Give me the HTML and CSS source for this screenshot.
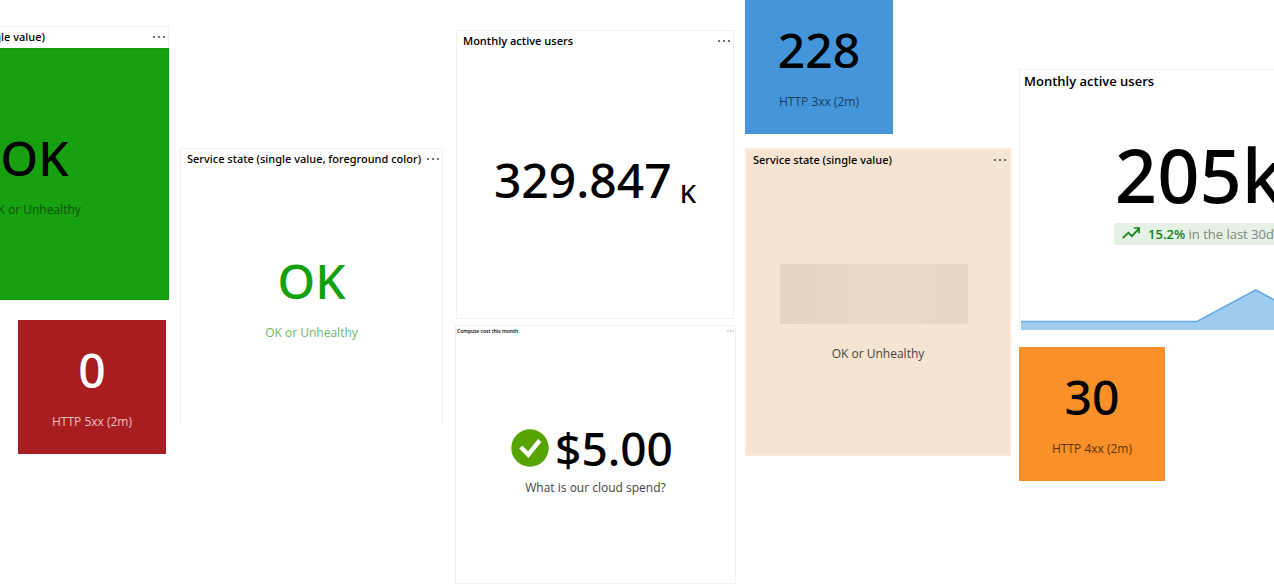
FILE: index.html
```html
<!DOCTYPE html>
<html lang="en">
<head>
<meta charset="utf-8">
<title>Dashboard tiles</title>
<link rel="stylesheet" href="styles.css">
</head>
<body>
<main class="wall">
  <section class="column column-first">
    <article class="card card-green">
      <header class="card-head"><h2 class="card-title">Service state (single value)</h2><button class="more" aria-label="More options"><svg viewBox="0 0 14 4"><circle cx="2" cy="2" r="1"/><circle cx="7" cy="2" r="1"/><circle cx="12" cy="2" r="1"/></svg></button></header>
      <div class="card-body"><p class="value">OK</p><p class="label">OK or Unhealthy</p></div>
    </article>
    <article class="tile tile-red"><p class="value">0</p><p class="label">HTTP 5xx (2m)</p></article>
  </section>

  <section class="column column-second">
    <article class="card card-foreground">
      <header class="card-head"><h2 class="card-title">Service state (single value, foreground color)</h2><button class="more" aria-label="More options"><svg viewBox="0 0 14 4"><circle cx="2" cy="2" r="1"/><circle cx="7" cy="2" r="1"/><circle cx="12" cy="2" r="1"/></svg></button></header>
      <div class="card-body"><p class="value">OK</p><p class="label">OK or Unhealthy</p></div>
    </article>
  </section>

  <section class="column column-third">
    <article class="card card-users">
      <header class="card-head"><h2 class="card-title">Monthly active users</h2><button class="more" aria-label="More options"><svg viewBox="0 0 14 4"><circle cx="2" cy="2" r="1"/><circle cx="7" cy="2" r="1"/><circle cx="12" cy="2" r="1"/></svg></button></header>
      <div class="card-body"><p class="value value-unit">329.847<span class="unit">K</span></p></div>
    </article>
    <article class="card card-cost">
      <header class="card-head card-head-tiny"><h2 class="card-title">Compute cost this month</h2><button class="more" aria-label="More options"><svg viewBox="0 0 14 4"><circle cx="2" cy="2" r="1"/><circle cx="7" cy="2" r="1"/><circle cx="12" cy="2" r="1"/></svg></button></header>
      <div class="card-body">
        <p class="value value-status"><svg class="status" viewBox="0 0 38 38" aria-hidden="true"><circle cx="19" cy="19" r="18.7" fill="#57a300"/><path d="M9.8 18l7.5 7.6L28.7 11.5" fill="none" stroke="#fff" stroke-width="4.4"/></svg>$5.00</p>
        <p class="label">What is our cloud spend?</p>
      </div>
    </article>
  </section>

  <section class="column column-fourth">
    <article class="tile tile-blue"><p class="value">228</p><p class="label">HTTP 3xx (2m)</p></article>
    <article class="card card-sand">
      <header class="card-head"><h2 class="card-title">Service state (single value)</h2><button class="more" aria-label="More options"><svg viewBox="0 0 14 4"><circle cx="2" cy="2" r="1"/><circle cx="7" cy="2" r="1"/><circle cx="12" cy="2" r="1"/></svg></button></header>
      <div class="card-body"><div class="placeholder"></div><p class="label">OK or Unhealthy</p></div>
    </article>
  </section>

  <section class="column column-fifth">
    <article class="card card-trend">
      <header class="card-head card-head-large"><h2 class="card-title">Monthly active users</h2></header>
      <div class="card-body">
        <p class="value value-large">205k</p>
        <p class="trend"><svg class="trend-icon" viewBox="0 0 18 12" aria-hidden="true"><path d="M.8 11.2L6.4 5.6l3.4 3.6L17 1.6M11.8 1H17v5.2" fill="none" stroke="#128212" stroke-width="1.7"/></svg><strong>15.2%</strong> in the last 30d</p>
      </div>
      <svg class="chart" viewBox="0 0 360 42" preserveAspectRatio="none" aria-hidden="true"><path d="M1 33.5H178L237 2L296 33.5H360V42H1Z" fill="#9fcbee"/><path d="M1 33.5H178L237 2L296 33.5H360" fill="none" stroke="#67ace2" stroke-width="1.6"/></svg>
    </article>
    <article class="tile tile-orange"><p class="value">30</p><p class="label">HTTP 4xx (2m)</p></article>
  </section>
</main>
</body>
</html>
```
FILE: styles.css
```css
* { box-sizing: border-box; }
body {
  margin: 0;
  background: #fff;
  color: #000;
  font-family: "Open Sans", "Noto Sans", sans-serif;
}
h2, p { margin: 0; }

.wall {
  display: grid;
  grid-template-columns: 172fr 267fr 282fr 266fr 255fr;
  gap: 8px;
  overflow: hidden;
}
.column {
  display: flex;
  flex-direction: column;
  min-width: 0;
}
.column-first { padding: 26px 3px 0 0; align-items: flex-end; gap: 20px; }
.column-second { padding: 148px 4px 0 0; }
.column-third { padding: 30px 1px 0 0; gap: 6px; }
.column-fourth { gap: 14px; }
.column-fifth { padding-top: 69px; gap: 17px; }

.card {
  display: flex;
  flex-direction: column;
  border: 1px solid #f1f1f1;
  background: #fff;
}
.card-head {
  display: flex;
  align-items: center;
  justify-content: space-between;
  padding: 0 2px 0 6px;
  line-height: 20px;
}
.card-title { font-size: 11px; font-weight: 600; white-space: nowrap; }
.more {
  display: flex;
  border: 0;
  padding: 0;
  background: none;
  color: #444;
}
.more svg { width: 14px; height: 4px; fill: currentColor; }
.card-head-tiny { padding: 0 1px; line-height: 10px; }
.card-head-tiny .card-title { font-size: 5px; }
.card-head-tiny .more svg { width: 7px; height: 2px; }
.card-head-large { padding-left: 4px; line-height: 22px; }
.card-head-large .card-title { font-size: 13px; }

.card-body {
  flex: 1;
  display: flex;
  flex-direction: column;
  align-items: center;
  justify-content: center;
  gap: 12px;
}
.value {
  font-family: "Noto Sans", "Open Sans", sans-serif;
  font-size: 48px;
  font-weight: 500;
  line-height: 60px;
  white-space: nowrap;
}
.label { color: #444; font-size: 12px; line-height: 20px; white-space: nowrap; }

.card-green { width: 270px; min-height: 274px; flex-shrink: 0; }
.card-green .card-head { padding-bottom: 1px; }
.card-green .card-body { margin: 0 -1px -1px 0; border: 1px solid #109a0c; background: #17a00f; }
.card-green .label { color: #0e520b; }
.card-foreground { min-height: 276px; border-bottom: 0; }
.card-foreground .value { color: #13a10e; }
.card-foreground .label { color: #6cb86a; }
.card-foreground .card-title, .card-sand .card-title, .card-green .card-title { font-family: "Noto Sans", "Open Sans", sans-serif; font-weight: 500; }
.card-users { min-height: 289px; margin: 0 2px 0 1px; }
.card-users .card-body { padding-bottom: 10px; }
.value-unit { display: flex; align-items: flex-end; gap: 8px; }
.unit { font-size: 26px; line-height: 34px; }
.card-cost { min-height: 259px; }
.card-cost .card-body { gap: 0; padding-bottom: 4px; }
.value-status { display: flex; align-items: center; gap: 6px; padding-right: 7px; font-size: 46px; }
.status { width: 38px; height: 38px; }
.card-sand { min-height: 308px; border: 2px solid #fbead6; background: #f4e4d1; }
.card-sand .card-body { gap: 20px; padding-top: 4px; }
.placeholder {
  width: 72%;
  height: 60px;
  margin-right: 8px;
  border-radius: 2px;
  background: linear-gradient(90deg, #e2d4c2, #e8d9c7 40%, #e7d7c5);
}

.card-trend { width: 360px; min-height: 261px; border-bottom: 0; }
.card-trend .card-body { gap: 8px; }
.value-large { font-size: 74px; line-height: 80px; }
.trend {
  padding: 0 10px 0 8px;
  border-radius: 3px;
  background: #e5f1e5;
  color: #7c8a7c;
  font-size: 13px;
  line-height: 22px;
  white-space: nowrap;
}
.trend strong { color: #128212; font-weight: 600; }
.trend-icon { width: 18px; height: 12px; margin-right: 8px; }
.chart { display: block; width: 100%; height: 42px; }

.tile {
  display: flex;
  flex-direction: column;
  align-items: center;
  gap: 12px;
  width: 148px;
  padding: 20px 0 22px;
}
.tile-red { margin-right: 3px; background: #a81d20; color: #fff; }
.tile-red .label { color: #ecc0c1; }
.tile-blue { background: #4595db; }
.tile-blue .label { color: #173f62; }
.tile-orange { width: 146px; background: #fa9029; }
.tile-orange .label { color: #5b350f; }
```
